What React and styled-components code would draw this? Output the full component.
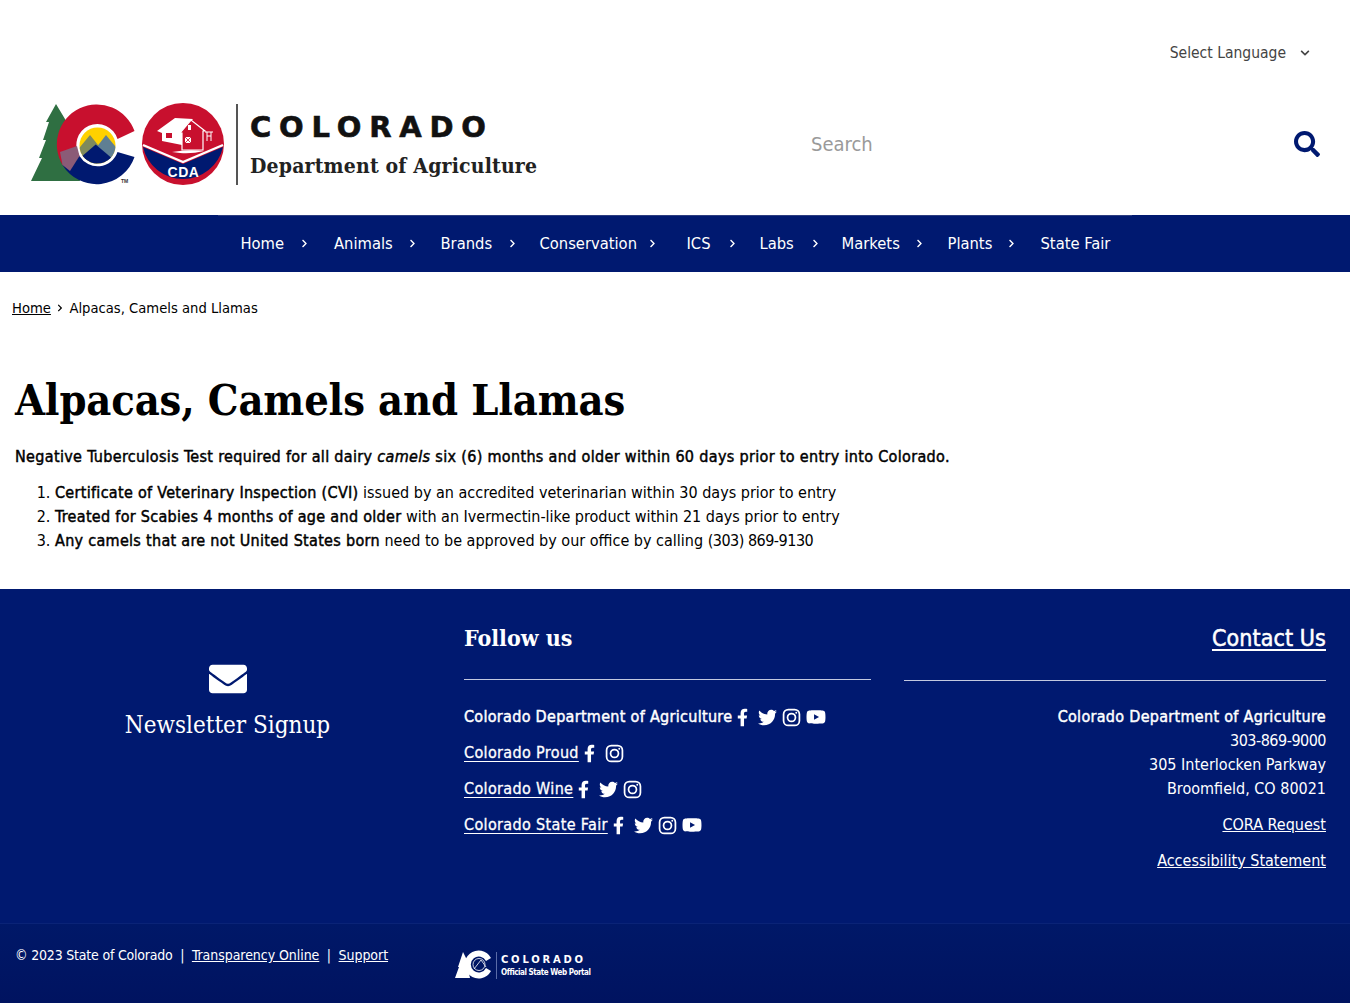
import React from "react";
import styled, { createGlobalStyle } from "styled-components";
import { FaSearch, FaFacebookF, FaTwitter, FaYoutube, FaEnvelope, FaChevronDown, FaChevronRight } from "react-icons/fa";

const BODY_FONT = `"DejaVu Sans Condensed", "DejaVu Sans", sans-serif`;
const SLAB_FONT = `"DejaVu Serif Condensed", "DejaVu Serif", serif`;
const NAVY = "#001970";

const GlobalStyle = createGlobalStyle`
  html, body {
    margin: 0;
    padding: 0;
    background: #fff;
    font-family: ${BODY_FONT};
    font-size: 16px;
    line-height: 24px;
    color: #000;
  }
  * { box-sizing: border-box; }
`;

const Page = styled.div`
  width: 1350px;
`;

const LanguageBar = styled.div`
  height: 96px;
  display: flex;
  justify-content: flex-end;
  align-items: flex-start;
  padding: 41px 40px 0 0;
`;

const LanguageSelect = styled.div`
  display: flex;
  align-items: center;
  gap: 14px;
  color: #444;
  font-size: 15.5px;
  svg { font-size: 10px; }
`;

const Header = styled.header`
  height: 119px;
  display: flex;
  justify-content: space-between;
  align-items: flex-start;
  padding: 4px 30px 0 28px;
`;

const LogoSvg = styled.svg`
  display: block;
  width: 512px;
  height: 90px;
`;

const SearchBox = styled.div`
  width: 509px;
  height: 88px;
  display: flex;
  align-items: center;
  justify-content: space-between;
  color: #9a9a9a;
  font-size: 20px;
  svg { font-size: 26px; color: ${NAVY}; }
`;

const Nav = styled.nav`
  height: 57px;
  background: linear-gradient(#2c3d80, #2c3d80) center top / 914px 1px no-repeat, ${NAVY};
  display: flex;
  justify-content: center;
  align-items: center;
  color: #fff;
  font-size: 16.4px;
`;

const NavItem = styled.div`
  display: flex;
  align-items: center;
  white-space: nowrap;
  width: ${(p) => p.$w}px;
  svg { font-size: 9px; margin-left: ${(p) => p.$gap}px; }
`;

const Breadcrumb = styled.div`
  padding: 24px 12px 0;
  font-size: 14.65px;
  display: flex;
  align-items: center;
  svg { font-size: 8px; margin: 0 5.5px 0 5px; }
`;

const UnderLink = styled.a`
  color: inherit;
  text-decoration: underline;
`;

const Main = styled.main`
  padding: 54px 15px 36px;
`;

const Title = styled.h1`
  font-family: ${SLAB_FONT};
  font-weight: 700;
  font-size: 43px;
  letter-spacing: -0.15px;
  line-height: 52px;
  margin: 0 0 19px;
`;

const Lead = styled.p`
  margin: 0 0 12px;
  letter-spacing: 0.33px;
  -webkit-text-stroke: 0.45px currentColor;
`;

const Steps = styled.ol`
  margin: 0;
  padding-left: 40px;
`;

const Heavy = styled.strong`
  font-weight: 400;
  letter-spacing: 0.3px;
  -webkit-text-stroke: 0.45px currentColor;
`;

const FooterTop = styled.footer`
  height: 334px;
  background: ${NAVY};
  color: #fff;
  display: grid;
  grid-template-columns: 455px 440px 1fr;
  padding-right: 24px;
`;

const SignupCol = styled.div`
  display: flex;
  flex-direction: column;
  align-items: center;
  padding-top: 71px;
  svg { font-size: 46px; height: 38px; }
`;

const SignupLabel = styled.div`
  font-family: ${SLAB_FONT};
  font-size: 24px;
  line-height: 30px;
  margin-top: 12px;
`;

const FollowCol = styled.div`
  padding: 34px 24px 0 9px;
`;

const ColTitle = styled.h2`
  font-family: ${SLAB_FONT};
  font-size: 23px;
  line-height: 30px;
  font-weight: 700;
  margin: 0 0 25px;
  padding-bottom: 26px;
  border-bottom: 1px solid #c3c9e0;
`;

const ContactTitle = styled.h2`
  font-size: 23px;
  line-height: 30px;
  font-weight: 400;
  letter-spacing: 0.1px;
  -webkit-text-stroke: 0.5px currentColor;
  margin: 0 0 24px;
  padding-bottom: 27px;
  border-bottom: 1px solid #c3c9e0;
  a { text-underline-offset: 3px; text-decoration-thickness: 2px; }
`;

const SocialRow = styled.div`
  display: flex;
  align-items: center;
  height: 24px;
  margin-bottom: 12px;
`;

const SocialLink = styled(UnderLink)`
  letter-spacing: 0.35px;
  -webkit-text-stroke: 0.3px currentColor;
  text-underline-offset: 3px;
`;

const SocialIcons = styled.span`
  display: inline-flex;
  align-items: center;
  gap: 5px;
  margin-left: 5px;
  svg { display: block; }
`;

const FacebookGlyph = styled(FaFacebookF)`
  width: 11px;
  height: 19px;
  margin-right: 5px;
`;

const ContactCol = styled.div`
  padding: 34px 0 0 9px;
  text-align: right;
`;

const ContactBlock = styled.div`
  margin-bottom: 12px;
`;

const Phone = styled.span`
  letter-spacing: -0.5px;
`;

const FooterBottom = styled.div`
  height: 80px;
  background: linear-gradient(#001868, #001360);
  border-top: 1px solid #0a2377;
  color: #fff;
  display: grid;
  grid-template-columns: 440px 1fr;
  padding: 19px 0 0 15px;
  font-size: 14px;
`;

const Copyright = styled.span`
  letter-spacing: -0.2px;
`;

const BottomLink = styled(UnderLink)`
  letter-spacing: -0.05px;
`;

const Sep = styled.span`
  margin: 0 7.5px;
`;

const PortalSvg = styled.svg`
  display: block;
  margin-top: 7px;
`;

const Instagram = ({ size = 19 }) => (
  <svg width={size} height={size} viewBox="0 0 24 24" fill="none" stroke="#fff" strokeWidth="2.2">
    <rect x="2" y="2" width="20" height="20" rx="6" />
    <circle cx="12" cy="12" r="5" />
    <circle cx="18" cy="6" r="1.2" fill="#fff" stroke="none" />
  </svg>
);

const socials = {
  f: <FacebookGlyph key="f" />,
  t: <FaTwitter key="t" size={19} />,
  i: <Instagram key="i" />,
  y: <FaYoutube key="y" size={20} />,
};

const CdaLogo = () => (
  <LogoSvg viewBox="28 100 512 90" role="img" aria-label="Colorado Department of Agriculture">
    <defs>
      <clipPath id="sun">
        <circle cx="97.5" cy="145.5" r="18" />
      </clipPath>
    </defs>
    <path d="M56 104 L68 124 L65 124 L74 142 L71 142 L80 181 L31 181 L42 158 L39 158 L46 140 L43 140 L49 122 L46 122 Z" fill="#2f6f42" />
    <path d="M134.5 131 A40 40 0 1 0 62.5 165 L79.5 156 A21 21 0 1 1 117.5 139 Z" fill="#c8102e" />
    <path d="M62.5 165 A40 40 0 0 0 134.5 157 L117.5 152 A21 21 0 0 1 79.5 156 Z" fill="#001970" />
    <path d="M60 152 L77 146 L79.5 156 L70 171 L62.5 165 Z" fill="#8b5b77" />
    <g clipPath="url(#sun)">
      <rect x="78" y="126" width="40" height="40" fill="#ffd100" />
      <path d="M76 152 L90 135 L102 150 L96 166 L76 166 Z" fill="#7f8a5c" />
      <path d="M96 148 L106 135 L120 152 L110 166 Z" fill="#5f7f93" />
      <path d="M80 166 L80 158 L95.7 144.5 L114 160 L114 166 Z" fill="#001970" />
    </g>
    <circle cx="183" cy="144" r="41" fill="#c8102e" />
    <path d="M143 147 L183 164 L223 147 A41 41 0 0 1 143 147 Z" fill="#001970" />
    <path d="M143 145 L183 162 L223 145" fill="none" stroke="#fff" strokeWidth="2.4" />
    <path d="M157 131 L175 118 L193 119 L182 132 L182 145 L162 141 L162 133 Z" fill="#fff" />
    <rect x="166" y="133" width="6" height="5" fill="#c8102e" />
    <path d="M180 133 L191 120 L205 131 L203 131 L203 150 L182 150 L182 133 Z" fill="#c8102e" stroke="#fff" strokeWidth="1.2" />
    <rect x="185" y="137" width="6" height="6" fill="#fff" />
    <path d="M185 137 L191 143 M191 137 L185 143" stroke="#c8102e" strokeWidth="0.8" />
    <rect x="188" y="125" width="3" height="5" fill="#fff" />
    <path d="M205 132 H213 M207 132 V141 M211 132 V141 M207 136 H211" stroke="#fff" strokeWidth="1" fill="none" />
    <path d="M172 152 Q188 149 204 151 Q192 154 180 153 Z" fill="#fff" />
    <text x="183.5" y="177" textAnchor="middle" fill="#fff" fontFamily="Liberation Sans" fontWeight="700" fontSize="14" letterSpacing="0.6">CDA</text>
    <text x="121" y="183" fill="#333" fontFamily="Liberation Sans" fontWeight="700" fontSize="5">TM</text>
    <rect x="236" y="104" width="2" height="81" fill="#555" />
    <text x="250" y="137" fill="#111" stroke="#111" strokeWidth="0.6" fontFamily="DejaVu Sans" fontWeight="700" fontSize="29" textLength="236">COLORADO</text>
    <text x="250" y="173" fill="#222" fontFamily="DejaVu Serif Condensed, DejaVu Serif" fontWeight="700" fontSize="21" textLength="287">Department of Agriculture</text>
  </LogoSvg>
);

const PortalLogo = () => (
  <PortalSvg width="136" height="30" viewBox="0 0 136 30" role="img" aria-label="Colorado Official State Web Portal">
    <path d="M8 2 L12 10 L11 10 L15 28 L0 28 L4 17 L3 17 Z" fill="#fff" />
    <path d="M36 8 A14 14 0 1 0 36 21 L31 18 A8 8 0 1 1 31 11 Z" fill="#fff" />
    <circle cx="24" cy="14.5" r="6" fill="none" stroke="#fff" strokeWidth="0.8" />
    <path d="M19 19 L26 10 L31 17" stroke="#fff" strokeWidth="0.8" fill="none" />
    <rect x="41" y="2" width="1" height="27" fill="#5a6ba8" />
    <text x="46" y="13" fill="#fff" fontFamily="DejaVu Sans" fontWeight="700" fontSize="10" textLength="82">COLORADO</text>
    <text x="46" y="25" fill="#fff" fontFamily="DejaVu Sans Condensed, DejaVu Sans" fontWeight="700" fontSize="8" textLength="90">Official State Web Portal</text>
  </PortalSvg>
);

const navItems = [
  ["Home", 93.5, 16],
  ["Animals", 106.5, 15],
  ["Brands", 99, 16],
  ["Conservation", 147, 11],
  ["ICS", 73, 17],
  ["Labs", 82, 17],
  ["Markets", 106, 15],
  ["Plants", 93, 15],
  ["State Fair", 69, 0],
];

const followRows = [
  { name: "Colorado Department of Agriculture", icons: "ftiy", bold: true },
  { name: "Colorado Proud", icons: "fi" },
  { name: "Colorado Wine", icons: "fti" },
  { name: "Colorado State Fair", icons: "ftiy" },
];

export default function App() {
  return (
    <Page>
      <GlobalStyle />
      <LanguageBar>
        <LanguageSelect>
          Select Language <FaChevronDown />
        </LanguageSelect>
      </LanguageBar>
      <Header>
        <CdaLogo />
        <SearchBox>
          Search
          <FaSearch />
        </SearchBox>
      </Header>
      <Nav>
        {navItems.map(([label, w, gap], i) => (
          <NavItem key={label} $w={w} $gap={gap}>
            {label}
            {i < navItems.length - 1 && <FaChevronRight />}
          </NavItem>
        ))}
      </Nav>
      <Breadcrumb>
        <UnderLink href="#">Home</UnderLink>
        <FaChevronRight />
        Alpacas, Camels and Llamas
      </Breadcrumb>
      <Main>
        <Title>Alpacas, Camels and Llamas</Title>
        <Lead>
          Negative Tuberculosis Test required for all dairy <em>camels</em> six (6) months and older within 60 days prior to entry into Colorado.
        </Lead>
        <Steps>
          <li><Heavy>Certificate of Veterinary Inspection (CVI)</Heavy> issued by an accredited veterinarian within 30 days prior to entry</li>
          <li><Heavy>Treated for Scabies 4 months of age and older</Heavy> with an Ivermectin-like product within 21 days prior to entry</li>
          <li><Heavy>Any camels that are not United States born</Heavy> need to be approved by our office by calling <Phone>(303) 869-9130</Phone></li>
        </Steps>
      </Main>
      <FooterTop>
        <SignupCol>
          <FaEnvelope />
          <SignupLabel>Newsletter Signup</SignupLabel>
        </SignupCol>
        <FollowCol>
          <ColTitle>Follow us</ColTitle>
          {followRows.map((row) => (
            <SocialRow key={row.name}>
              {row.bold ? <Heavy>{row.name}</Heavy> : <SocialLink href="#">{row.name}</SocialLink>}
              <SocialIcons>{row.icons.split("").map((k) => socials[k])}</SocialIcons>
            </SocialRow>
          ))}
        </FollowCol>
        <ContactCol>
          <ContactTitle><UnderLink href="#">Contact Us</UnderLink></ContactTitle>
          <ContactBlock>
            <Heavy>Colorado Department of Agriculture</Heavy><br />
            <Phone>303-869-9000</Phone><br />
            305 Interlocken Parkway<br />
            Broomfield, CO 80021
          </ContactBlock>
          <ContactBlock><UnderLink href="#">CORA Request</UnderLink></ContactBlock>
          <ContactBlock><UnderLink href="#">Accessibility Statement</UnderLink></ContactBlock>
        </ContactCol>
      </FooterTop>
      <FooterBottom>
        <div>
          <Copyright>© 2023 State of Colorado</Copyright><Sep>|</Sep><BottomLink href="#">Transparency Online</BottomLink><Sep>|</Sep><BottomLink href="#">Support</BottomLink>
        </div>
        <PortalLogo />
      </FooterBottom>
    </Page>
  );
}
